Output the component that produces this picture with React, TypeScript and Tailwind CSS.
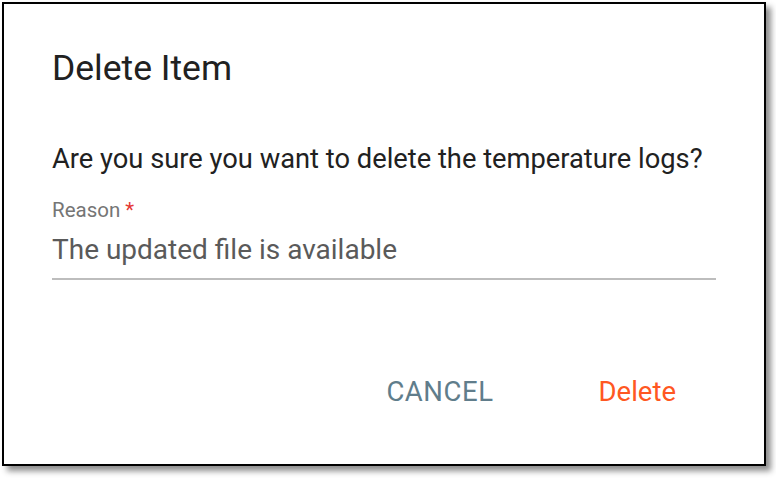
import React from "react";

export default function App() {
  return (
    <div className="w-[776px] h-[478px] bg-white" style={{ fontFamily: "Roboto, 'Liberation Sans', sans-serif" }}>
      <div className="ml-[2px] mt-[2px] w-[764px] h-[464px] border-2 border-black bg-white shadow-[5px_5px_6px_rgba(0,0,0,0.45)] flex flex-col px-12">
        <h2 className="mt-[40px] text-[35.5px] leading-[48px] text-[#212121] font-normal whitespace-nowrap">Delete Item</h2>
        <p className="mt-[47px] text-[27.3px] leading-[40px] text-[#212121] whitespace-nowrap">Are you sure you want to delete the temperature logs?</p>
        <div className="mt-[19px] flex flex-col">
          <label className="text-[20.5px] leading-[24px] text-[#757575]">
            Reason <span className="text-[#e53935]">*</span>
          </label>
          <div className="mt-[8px] text-[28px] leading-[40px] text-[#5a5a5a] pb-[8px] border-b-2 border-[#bdbdbd] whitespace-nowrap">
            The updated file is available
          </div>
        </div>
        <div className="mt-auto mb-[52px] flex justify-end items-center">
          <button className="text-[27.5px] leading-[40px] tracking-[0.02em] text-[#607d8b] uppercase px-4">Cancel</button>
          <button className="ml-[73px] text-[27.5px] leading-[40px] text-[#ff5722] px-4 mr-6">Delete</button>
        </div>
      </div>
    </div>
  );
}
